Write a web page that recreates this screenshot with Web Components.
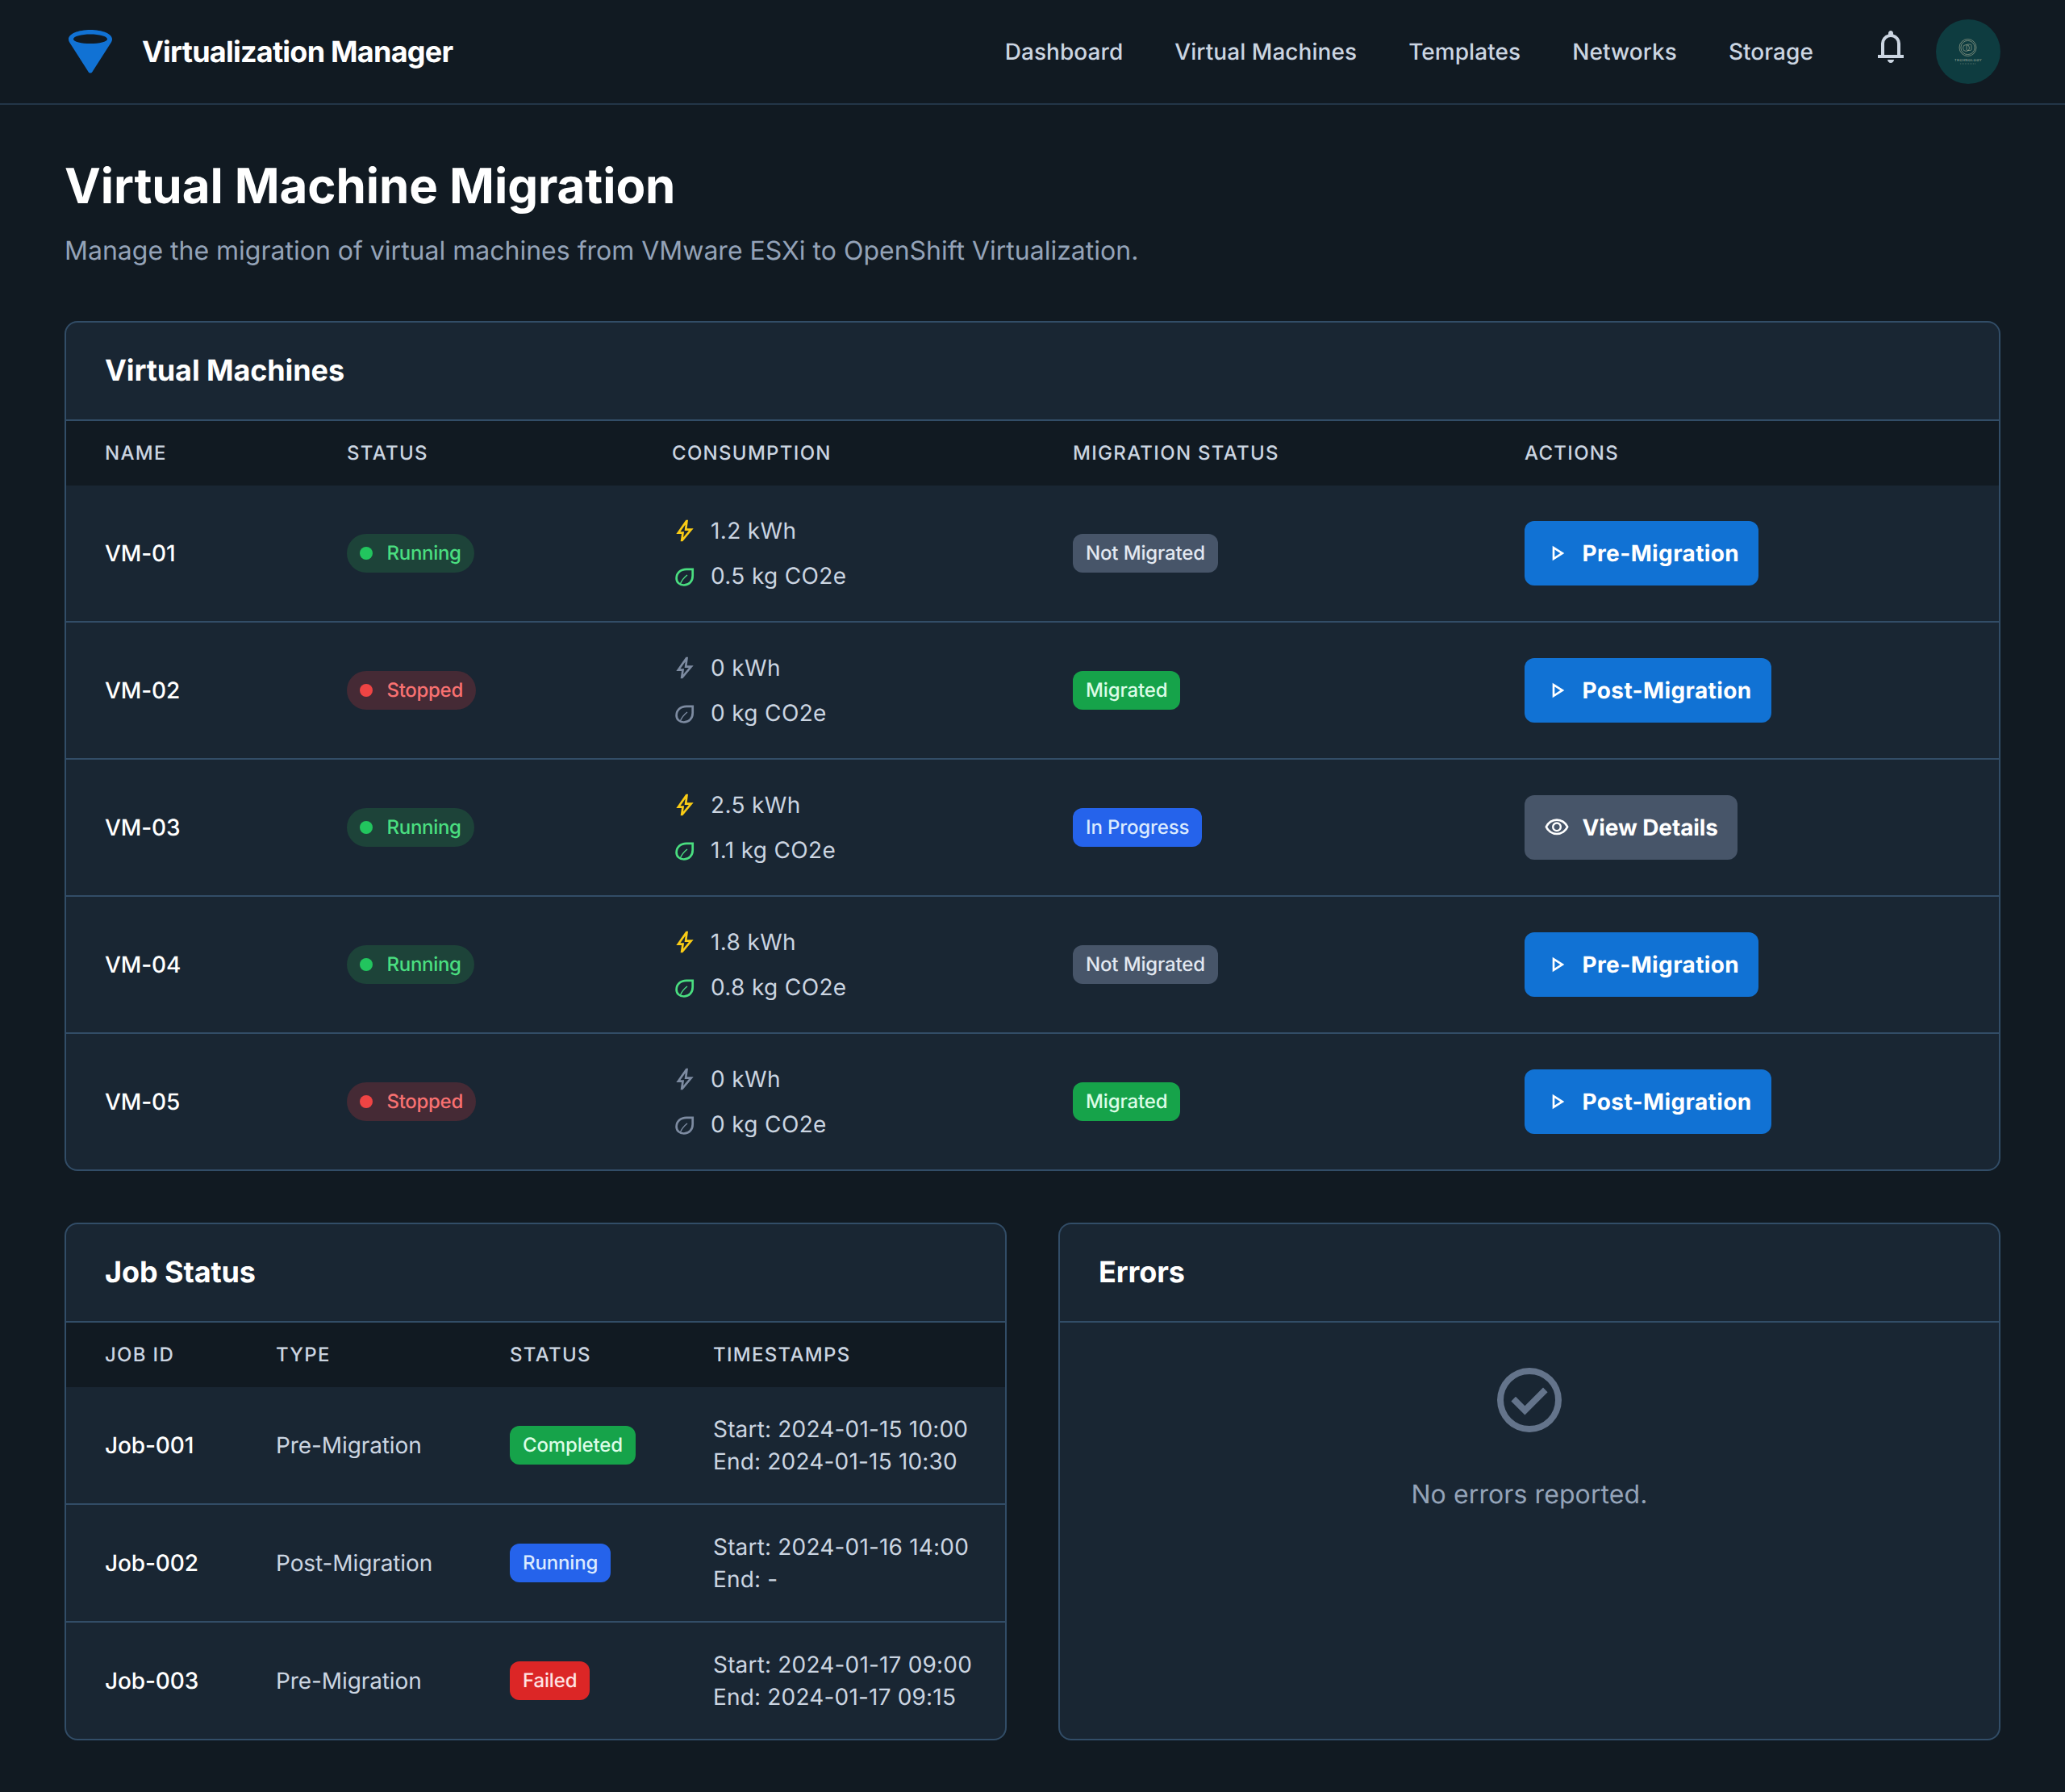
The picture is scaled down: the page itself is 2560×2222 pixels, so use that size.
<!DOCTYPE html>
<html lang="en">
<head>
<meta charset="utf-8">
<title>Virtualization Manager</title>
<style>
    html, body {
        margin: 0;
        background: #111a22;
    }
</style>
</head>
<body>
<app-page>
    <app-header slot="header" title="Virtualization Manager">
        <nav-link>Dashboard</nav-link>
        <nav-link>Virtual Machines</nav-link>
        <nav-link>Templates</nav-link>
        <nav-link>Networks</nav-link>
        <nav-link>Storage</nav-link>
    </app-header>

    <page-title heading="Virtual Machine Migration">Manage the migration of virtual machines from VMware ESXi to OpenShift Virtualization.</page-title>

    <panel-card heading="Virtual Machines" style="--cols: 300px 403px 497px 560px 1fr">
        <table-row head>
            <span>Name</span><span>Status</span><span>Consumption</span><span>Migration Status</span><span>Actions</span>
        </table-row>
        <table-row border tall>
            <span class="name">VM-01</span>
            <status-pill kind="running">Running</status-pill>
            <usage-cell kwh="1.2 kWh" co2="0.5 kg CO2e" on></usage-cell>
            <state-badge kind="gray">Not Migrated</state-badge>
            <action-button icon="play">Pre-Migration</action-button>
        </table-row>
        <table-row border tall>
            <span class="name">VM-02</span>
            <status-pill kind="stopped">Stopped</status-pill>
            <usage-cell kwh="0 kWh" co2="0 kg CO2e"></usage-cell>
            <state-badge kind="green">Migrated</state-badge>
            <action-button icon="play">Post-Migration</action-button>
        </table-row>
        <table-row border tall>
            <span class="name">VM-03</span>
            <status-pill kind="running">Running</status-pill>
            <usage-cell kwh="2.5 kWh" co2="1.1 kg CO2e" on></usage-cell>
            <state-badge kind="blue">In Progress</state-badge>
            <action-button icon="eye" muted>View Details</action-button>
        </table-row>
        <table-row border tall>
            <span class="name">VM-04</span>
            <status-pill kind="running">Running</status-pill>
            <usage-cell kwh="1.8 kWh" co2="0.8 kg CO2e" on></usage-cell>
            <state-badge kind="gray">Not Migrated</state-badge>
            <action-button icon="play">Pre-Migration</action-button>
        </table-row>
        <table-row tall>
            <span class="name">VM-05</span>
            <status-pill kind="stopped">Stopped</status-pill>
            <usage-cell kwh="0 kWh" co2="0 kg CO2e"></usage-cell>
            <state-badge kind="green">Migrated</state-badge>
            <action-button icon="play">Post-Migration</action-button>
        </table-row>
    </panel-card>

    <two-columns>
        <panel-card heading="Job Status" style="--cols: 212px 290px 252px 1fr">
            <table-row head>
                <span>Job ID</span><span>Type</span><span>Status</span><span>Timestamps</span>
            </table-row>
            <table-row border>
                <span class="name">Job-001</span>
                <span class="soft">Pre-Migration</span>
                <state-badge kind="green">Completed</state-badge>
                <span class="stamp">Start: 2024-01-15 10:00<br>End: 2024-01-15 10:30</span>
            </table-row>
            <table-row border>
                <span class="name">Job-002</span>
                <span class="soft">Post-Migration</span>
                <state-badge kind="blue">Running</state-badge>
                <span class="stamp">Start: 2024-01-16 14:00<br>End: -</span>
            </table-row>
            <table-row>
                <span class="name">Job-003</span>
                <span class="soft">Pre-Migration</span>
                <state-badge kind="red">Failed</state-badge>
                <span class="stamp">Start: 2024-01-17 09:00<br>End: 2024-01-17 09:15</span>
            </table-row>
        </panel-card>
        <panel-card heading="Errors">
            <empty-note>No errors reported.</empty-note>
        </panel-card>
    </two-columns>
</app-page>

<script>
const ICONS = {
    bell: 'M160-200v-80h80v-280q0-83 50-147.5T420-792v-28q0-25 17.5-42.5T480-880q25 0 42.5 17.5T540-820v28q80 20 130 84.5T720-560v280h80v80H160Zm320-300Zm0 420q-33 0-56.5-23.5T400-160h160q0 33-23.5 56.5T480-80ZM320-280h320v-280q0-66-47-113t-113-47q-66 0-113 47t-47 113v280Z',
    bolt: 'm422-232 207-248H469l29-227-185 267h139l-30 208ZM320-80l40-280H160l360-520h80l-40 320h240L400-80h-80Z',
    play: 'M320-200v-560l440 280-440 280Zm80-280Zm0 134 210-134-210-134v268Z',
    eye: 'M480-320q75 0 127.5-52.5T660-500q0-75-52.5-127.5T480-680q-75 0-127.5 52.5T300-500q0 75 52.5 127.5T480-320Zm0-72q-45 0-76.5-31.5T372-500q0-45 31.5-76.5T480-608q45 0 76.5 31.5T588-500q0 45-31.5 76.5T480-392Zm0 192q-146 0-266-81.5T40-500q54-137 174-218.5T480-800q146 0 266 81.5T920-500q-54 137-174 218.5T480-200Zm0-300Zm0 220q113 0 207.5-59.5T832-500q-50-101-144.5-160.5T480-720q-113 0-207.5 59.5T128-500q50 101 144.5 160.5T480-280Z',
    check: 'm424-296 282-282-56-56-226 226-114-114-56 56 170 170Zm56 216q-83 0-156-31.5T197-197q-54-54-85.5-127T80-480q0-83 31.5-156T197-763q54-54 127-85.5T480-880q83 0 156 31.5T763-763q54 54 85.5 127T880-480q0 83-31.5 156T763-197q-54 54-127 85.5T480-80Zm0-80q134 0 227-93t93-227q0-134-93-227t-227-93q-134 0-227 93t-93 227q0 134 93 227t227 93Z'
};

const icon = (name, size) => `<svg width="${size}" height="${size}" viewBox="0 -960 960 960" fill="currentColor" style="display:block;flex:none"><path d="${ICONS[name]}"/></svg>`;

class BaseElement extends HTMLElement {
    connectedCallback() {
        if (this.shadowRoot) return;
        this.attachShadow({ mode: "open" });
        this.shadowRoot.innerHTML = `<style>${this.getStyles()}</style>${this.getMarkup()}`;
    }
    getStyles() { return ""; }
    getMarkup() { return "<slot></slot>"; }
}

class AppPage extends BaseElement {
    getStyles() {
        return `
            :host {
                display: block;
                min-height: 2222px;
                box-sizing: border-box;
                background: #111a22;
                color: #fff;
                font-family: Inter, "Liberation Sans", sans-serif;
                font-size: 28px;
                line-height: 40px;
                text-rendering: geometricPrecision;
            }
            main { padding: 64px 80px; display: flex; flex-direction: column; gap: 64px; }
        `;
    }
    getMarkup() {
        return `<slot name="header"></slot><main><slot></slot></main>`;
    }
}

class AppHeader extends BaseElement {
    getStyles() {
        return `
            :host {
                display: flex;
                align-items: center;
                height: 128px;
                padding: 0 80px;
                border-bottom: 2px solid #233648;
            }
            .logo { width: 64px; height: 64px; flex: none; margin-right: 32px; }
            h2 { margin: 0; font-size: 36px; line-height: 44px; font-weight: 700; letter-spacing: -0.76px; flex: 1; }
            nav { display: flex; gap: 64px; margin-right: 72px; letter-spacing: .06px; }
            .bell { color: #cbd5e1; margin-right: 32px; margin-bottom: 12px; }
            .avatar { width: 80px; height: 80px; border-radius: 50%; background: #0e3c40; flex: none; position: relative; overflow: hidden; display: block; }
            .avatar text { font-family: Inter, sans-serif; font-size: 4.2px; letter-spacing: .5px; fill: #b3bdac; text-anchor: middle; }
        `;
    }
    getMarkup() {
        return `
            <svg class="logo" viewBox="0 0 64 64">
                <path fill="#1172d4" fill-rule="evenodd" d="M32 5C17 5 5 10 5 16.500c0 1.400.3 2.600 1 3.700L29.500 57c1.200 2 3.800 2 5 0L58 20.200c.7-1.100 1-2.300 1-3.700C59 10 47 5 32 5Zm0 5.500c11 0 21 2.500 21 6s-10 5.500-21 5.500-21-2-21-5.500 10-6 21-6Z"/>
            </svg>
            <h2>${this.getAttribute("title")}</h2>
            <nav><slot></slot></nav>
            <span class="bell">${icon("bell", 48)}</span>
            <svg class="avatar" viewBox="0 0 80 80">
                <g fill="none" stroke="#b3b79c" stroke-width=".6">
                    <circle cx="39.500" cy="35" r="10.500"/>
                    <circle cx="39.500" cy="35" r="8.600"/>
                    <circle cx="37.500" cy="35.500" r="4"/>
                    <rect x="38" y="31" width="6" height="7.500" rx="1.500"/>
                    <path d="M30 55h19" stroke-dasharray="1 1" stroke-width=".4"/>
                </g>
                <text x="40" y="52">TECHNOLOGY</text>
            </svg>
        `;
    }
}

class NavLink extends BaseElement {
    getStyles() {
        return `:host { display: block; color: #cbd5e1; font-size: 28px; font-weight: 500; line-height: 40px; }`;
    }
}

class PageTitle extends BaseElement {
    getStyles() {
        return `
            :host { display: block; }
            h1 { margin: 0 0 21px; padding-top: 1px; font-size: 60px; line-height: 72px; font-weight: 700; color: #fff; letter-spacing: -0.07px; }
            p { margin: 0; font-size: 32px; line-height: 46px; color: #94a3b8; }
        `;
    }
    getMarkup() {
        return `<h1>${this.getAttribute("heading")}</h1><p><slot></slot></p>`;
    }
}

class PanelCard extends BaseElement {
    getStyles() {
        return `
            :host {
                display: flex;
                flex-direction: column;
                background: #192633;
                border: 2px solid #324d67;
                border-radius: 16px;
                overflow: hidden;
            }
            h3 {
                margin: 0;
                height: 122px;
                box-sizing: border-box;
                padding: 0 48px 2px;
                display: flex;
                align-items: center;
                font-size: 36px;
                font-weight: 700;
                letter-spacing: -0.1px;
                color: #fff;
                border-bottom: 2px solid #324d67;
            }
        `;
    }
    getMarkup() {
        return `<h3>${this.getAttribute("heading")}</h3><slot></slot>`;
    }
}

class TableRow extends BaseElement {
    getStyles() {
        return `
            :host {
                display: grid;
                grid-template-columns: var(--cols);
                align-items: center;
                padding: 32px 48px;
                min-height: 80px;
                color: #fff;
            }
            :host([tall]) { padding: 36px 48px; }
            :host([border]) { border-bottom: 2px solid #324d67; }
            :host([head]) {
                background: #111a22;
                padding: 0 48px;
                height: 80px;
                color: #cbd5e1;
                font-size: 24px;
                font-weight: 500;
                letter-spacing: 1.3px;
                text-transform: uppercase;
            }
            ::slotted(.name) { font-weight: 500; letter-spacing: -0.12px; }
            ::slotted(.soft) { color: #cbd5e1; letter-spacing: -0.1px; white-space: nowrap; }
            ::slotted(.stamp) { color: #cbd5e1; letter-spacing: .18px; white-space: nowrap; }
        `;
    }
}

class StatusPill extends BaseElement {
    getStyles() {
        return `
            :host { display: inline-flex; justify-self: start; align-items: center; gap: 17.500px; height: 48px; padding: 0 16px; border-radius: 24px; font-size: 24px; font-weight: 500; line-height: 32px; letter-spacing: -0.3px; }
            :host([kind="running"]) { background: #1d4339; color: #4ade80; --dot: #22c55e; }
            :host([kind="stopped"]) { background: #452a35; color: #f87171; --dot: #ef4444; }
            i { width: 16px; height: 16px; border-radius: 50%; background: var(--dot); }
        `;
    }
    getMarkup() {
        return `<i></i><slot></slot>`;
    }
}

class StateBadge extends BaseElement {
    getStyles() {
        return `
            :host { display: inline-flex; justify-self: start; align-items: center; height: 48px; padding: 0 16px; border-radius: 12px; font-size: 24px; font-weight: 500; line-height: 32px; letter-spacing: -0.14px; }
            :host([kind="gray"]) { background: #475569; color: #e2e8f0; }
            :host([kind="green"]) { background: #16a34a; color: #dcfce7; }
            :host([kind="blue"]) { background: #2563eb; color: #dbeafe; }
            :host([kind="red"]) { background: #dc2626; color: #fee2e2; }
        `;
    }
}

class UsageCell extends BaseElement {
    getStyles() {
        return `
            :host { display: flex; flex-direction: column; gap: 16px; color: #cbd5e1; letter-spacing: .35px; --bolt: #7d8ba1; --leaf: #7d8ba1; }
            :host([on]) { --bolt: #facc15; --leaf: #4ade80; }
            div { display: flex; align-items: center; gap: 16px; height: 40px; }
            .bolt { color: var(--bolt); }
            .leaf { color: var(--leaf); }
        `;
    }
    getMarkup() {
        return `
            <div><span class="bolt">${icon("bolt", 32)}</span>${this.getAttribute("kwh")}</div>
            <div><span class="leaf"><svg width="32" height="32" viewBox="0 0 32 32" fill="none" stroke="currentColor" style="display:block"><g transform="translate(0 1.500)"><path stroke-width="2.700" d="M25.700 6.300H18C10.500 6.300 5.600 11 5.600 17.500 5.600 22.500 9.500 26 14.800 26 21.500 26 25.700 21 25.700 14.500Z"/><path stroke-width="1.500" d="M10 25.500C11.500 21 14.500 17 19 13.500"/></g></svg></span>${this.getAttribute("co2")}</div>
        `;
    }
}

class ActionButton extends BaseElement {
    getStyles() {
        return `
            :host { display: inline-flex; justify-self: start; align-items: center; gap: 15.500px; height: 80px; padding: 0 24px; border-radius: 12px; background: #1172d4; color: #fff; font-size: 28px; font-weight: 700; letter-spacing: .38px; }
            :host([muted]) { background: #475569; letter-spacing: -0.1px; }
        `;
    }
    getMarkup() {
        return `${icon(this.getAttribute("icon"), 32)}<slot></slot>`;
    }
}

class TwoColumns extends BaseElement {
    getStyles() {
        return `:host { display: grid; grid-template-columns: 1fr 1fr; gap: 64px; }`;
    }
}

class EmptyNote extends BaseElement {
    getStyles() {
        return `
            :host { display: flex; flex-direction: column; align-items: center; padding: 48px; color: #94a3b8; font-size: 32px; line-height: 48px; letter-spacing: .1px; }
            .mark { color: #64748b; margin-bottom: 45px; }
        `;
    }
    getMarkup() {
        return `<span class="mark">${icon("check", 96)}</span><slot></slot>`;
    }
}

customElements.define('app-page', AppPage);
customElements.define('app-header', AppHeader);
customElements.define('nav-link', NavLink);
customElements.define('page-title', PageTitle);
customElements.define('panel-card', PanelCard);
customElements.define('table-row', TableRow);
customElements.define('status-pill', StatusPill);
customElements.define('state-badge', StateBadge);
customElements.define('usage-cell', UsageCell);
customElements.define('action-button', ActionButton);
customElements.define('two-columns', TwoColumns);
customElements.define('empty-note', EmptyNote);
</script>
</body>
</html>
